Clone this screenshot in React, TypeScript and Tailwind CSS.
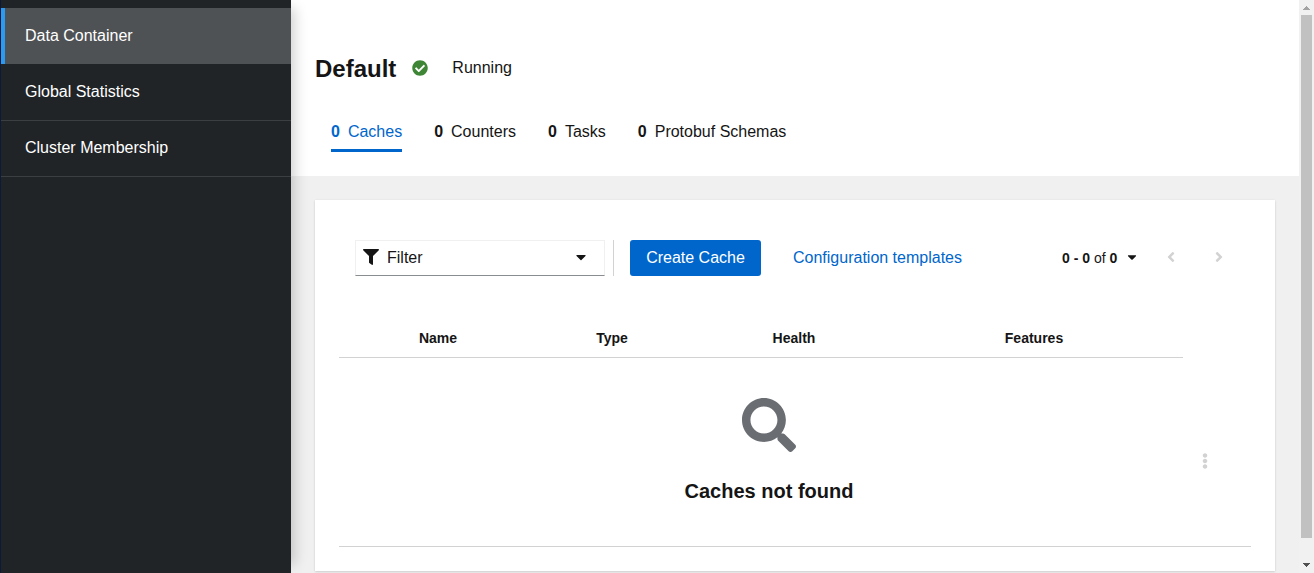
import React from 'react';
import {
  FaAngleLeft,
  FaAngleRight,
  FaCaretDown,
  FaCheckCircle,
  FaEllipsisV,
  FaFilter,
  FaSearch,
} from 'react-icons/fa';

const tabs = ['Caches', 'Counters', 'Tasks', 'Protobuf Schemas'];

function Sidebar() {
  return (
    <aside className="relative z-10 w-[291px] shrink-0 border-l border-[#0b1a3a] bg-[#212427] pt-2 text-white shadow-[12px_0_12px_-8px_rgba(3,3,3,0.18)]">
      <nav>
        <a className="flex h-14 items-center border-l-4 border-[#2b9af3] bg-[#4f5255] pl-5 pb-px">Data Container</a>
        <a className="flex h-[57px] items-center border-b border-[#3c3f42] pl-6 pb-px">Global Statistics</a>
        <a className="flex h-14 items-center border-b border-[#3c3f42] pl-6 pb-px">Cluster Membership</a>
      </nav>
    </aside>
  );
}

function Header() {
  return (
    <header className="h-44 bg-white pl-6 pt-[50px]">
      <div className="flex h-9 items-center">
        <h1 className="pt-0.5 text-2xl font-bold leading-9">Default</h1>
        <FaCheckCircle className="ml-4 size-4 text-[#3e8635]" />
        <span className="ml-6 pb-px">Running</span>
      </div>
      <div className="ml-4 mt-[26px] flex h-10 gap-8">
        {tabs.map((tab, i) => (
          <div
            key={tab}
            className={
              i === 0
                ? 'flex gap-2 border-b-[3px] border-[#06c] pt-2 text-[#06c]'
                : 'flex gap-2 pt-2'
            }
          >
            <b>0</b>
            <span>{tab}</span>
          </div>
        ))}
      </div>
    </header>
  );
}

function Toolbar() {
  return (
    <div className="flex h-9 items-center pl-4">
      <div className="flex h-9 w-[250px] items-center border border-[#f0f0f0] border-b-[#8a8d90] pl-[7px] pr-[18px]">
        <FaFilter className="mb-0.5 size-4" />
        <span className="ml-2">Filter</span>
        <FaCaretDown className="mb-0.5 ml-auto h-4 w-[10px]" />
      </div>
      <div className="ml-2 h-9 w-px bg-[#d2d2d2]" />
      <button className="ml-4 h-9 w-[131px] rounded-[3px] bg-[#06c] text-white">Create Cache</button>
      <a className="ml-8 text-[#06c]">Configuration templates</a>
      <div className="ml-[100px] flex items-center text-sm">
        <span>
          <b>0 - 0</b> of <b>0</b>
        </span>
        <FaCaretDown className="mb-0.5 ml-[10px] h-[14px] w-[10px]" />
      </div>
      <FaAngleLeft className="mb-0.5 ml-[26px] size-4 text-[#d2d2d2]" />
      <FaAngleRight className="mb-0.5 ml-8 size-4 text-[#d2d2d2]" />
    </div>
  );
}

function CacheTable() {
  return (
    <div className="mt-[43px]">
      <div className="grid h-[39px] w-[844px] grid-cols-[198px_150px_214px_266px] border-b border-[#d2d2d2] text-center text-sm font-bold leading-[38px]">
        <span>Name</span>
        <span>Type</span>
        <span>Health</span>
        <span>Features</span>
      </div>
      <div className="flex h-[189px] border-b border-[#d2d2d2]">
        <div className="flex w-[860px] flex-col items-center pt-10">
          <FaSearch className="size-[54px] text-[#6a6e73]" />
          <h2 className="mt-6 text-xl font-bold leading-[30px]">Caches not found</h2>
        </div>
        <FaEllipsisV className="-ml-[2px] mt-[95px] size-4 text-[#d2d2d2]" />
      </div>
    </div>
  );
}

function Scrollbar() {
  return (
    <div className="flex w-[15px] shrink-0 flex-col items-center bg-[#f1f1f1]">
      <svg className="h-[15px] w-[15px] shrink-0" viewBox="0 0 15 15" shapeRendering="crispEdges">
        <path d="M4 10h7v-1h-1v-1h-1v-1h-1v-1h-1v1h-1v1h-1v1h-1z" fill="#a3a3a3" />
      </svg>
      <div className="h-[523px] w-[11px] shrink-0 bg-[#c1c1c1]" />
      <svg className="mt-5 h-[15px] w-[15px] shrink-0" viewBox="0 0 15 15" shapeRendering="crispEdges">
        <path d="M4 5h7v1h-1v1h-1v1h-1v1h-1v-1h-1v-1h-1v-1h-1z" fill="#505050" />
      </svg>
    </div>
  );
}

export default function App() {
  return (
    <div className="flex h-[573px] w-[1314px] overflow-hidden bg-[#f0f0f0] font-['Liberation_Sans',sans-serif] text-base text-[#151515]">
      <Sidebar />
      <main className="min-w-0 flex-1">
        <Header />
        <section className="mx-6 mt-6 h-[371px] bg-white px-6 pt-10 shadow-[0_1px_2px_0_rgba(3,3,3,0.12),0_0_2px_0_rgba(3,3,3,0.06)]">
          <Toolbar />
          <CacheTable />
        </section>
      </main>
      <Scrollbar />
    </div>
  );
}
